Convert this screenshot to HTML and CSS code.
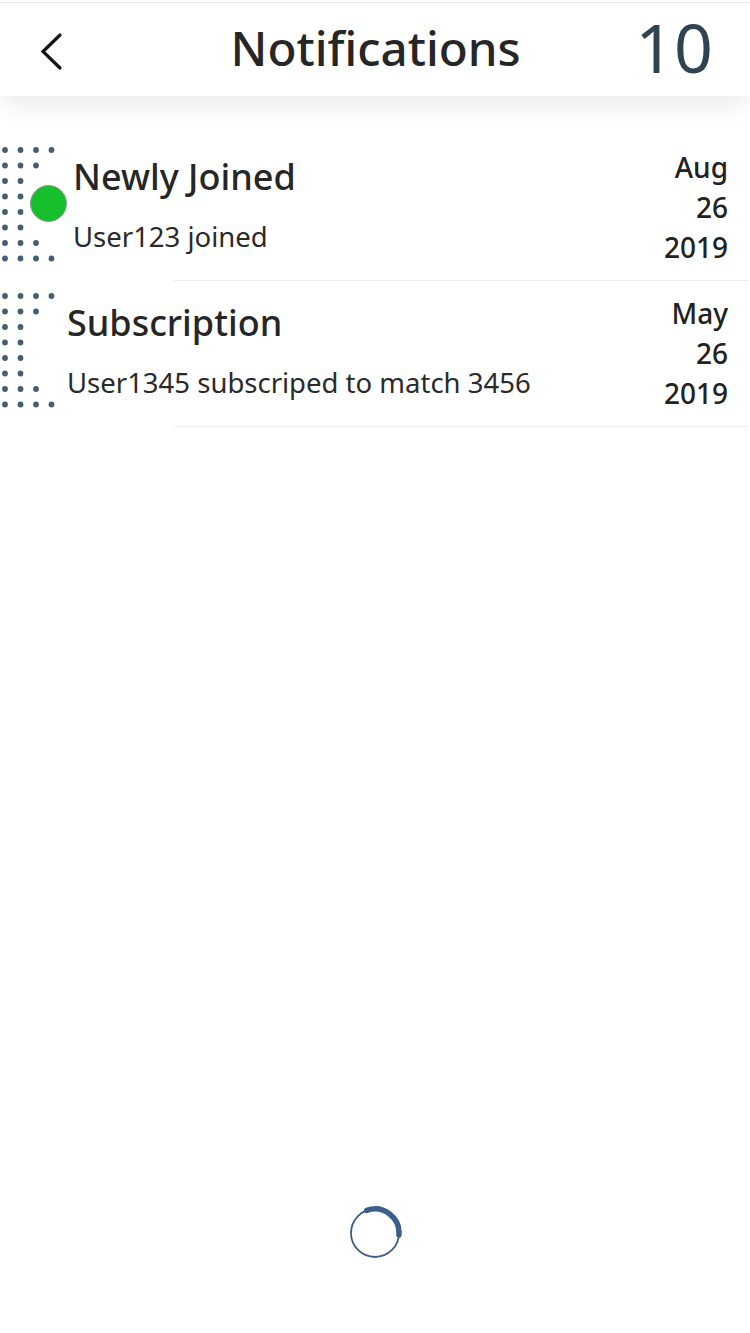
FILE: index.html
```html
<!DOCTYPE html>
<html>
<head>
<meta charset="utf-8">
<link rel="stylesheet" href="styles.css">
</head>
<body>
<div class="app">
  <header class="topbar">
    <div class="back">
      <svg width="24" height="40" viewBox="0 0 24 40"><polyline points="20,3 3,19.5 20,36" fill="none" stroke="#111" stroke-width="3.2" stroke-linecap="round" stroke-linejoin="miter"/></svg>
    </div>
    <h1 class="title">Notifications</h1>
    <div class="count">10</div>
  </header>

  <ul class="list">
    <li class="item unread">
      <div class="deco">
        <svg class="dots" width="60" height="130" viewBox="0 0 60 130">
          <g fill="#445f6f">
            <circle cx="5" cy="15" r="2.9"/><circle cx="20.5" cy="15" r="2.9"/><circle cx="36" cy="15" r="2.9"/><circle cx="51.5" cy="15" r="2.9"/>
            <circle cx="5" cy="30.5" r="2.9"/><circle cx="20.5" cy="30.5" r="2.9"/><circle cx="36" cy="30.5" r="2.9"/>
            <circle cx="5" cy="46" r="2.9"/><circle cx="20.5" cy="46" r="2.9"/>
            <circle cx="5" cy="61.5" r="2.9"/><circle cx="20.5" cy="61.5" r="2.9"/>
            <circle cx="5" cy="77" r="2.9"/><circle cx="20.5" cy="77" r="2.9"/>
            <circle cx="5" cy="92.5" r="2.9"/><circle cx="20.5" cy="92.5" r="2.9"/>
            <circle cx="5" cy="108" r="2.9"/><circle cx="20.5" cy="108" r="2.9"/><circle cx="36" cy="108" r="2.9"/>
            <circle cx="5" cy="123.5" r="2.9"/><circle cx="20.5" cy="123.5" r="2.9"/><circle cx="36" cy="123.5" r="2.9"/><circle cx="51.5" cy="123.5" r="2.9"/>
          </g>
        </svg>
        <span class="status"></span>
      </div>
      <div class="body">
        <h2 class="heading">Newly Joined</h2>
        <p class="text">User123 joined</p>
      </div>
      <div class="date"><span>Aug</span><span>26</span><span>2019</span></div>
    </li>
    <li class="item">
      <div class="deco">
        <svg class="dots" width="60" height="130" viewBox="0 0 60 130">
          <g fill="#445f6f">
            <circle cx="5" cy="15" r="2.9"/><circle cx="20.5" cy="15" r="2.9"/><circle cx="36" cy="15" r="2.9"/><circle cx="51.5" cy="15" r="2.9"/>
            <circle cx="5" cy="30.5" r="2.9"/><circle cx="20.5" cy="30.5" r="2.9"/><circle cx="36" cy="30.5" r="2.9"/>
            <circle cx="5" cy="46" r="2.9"/><circle cx="20.5" cy="46" r="2.9"/>
            <circle cx="5" cy="61.5" r="2.9"/><circle cx="20.5" cy="61.5" r="2.9"/>
            <circle cx="5" cy="77" r="2.9"/><circle cx="20.5" cy="77" r="2.9"/>
            <circle cx="5" cy="92.5" r="2.9"/><circle cx="20.5" cy="92.5" r="2.9"/>
            <circle cx="5" cy="108" r="2.9"/><circle cx="20.5" cy="108" r="2.9"/><circle cx="36" cy="108" r="2.9"/>
            <circle cx="5" cy="123.5" r="2.9"/><circle cx="20.5" cy="123.5" r="2.9"/><circle cx="36" cy="123.5" r="2.9"/><circle cx="51.5" cy="123.5" r="2.9"/>
          </g>
        </svg>
      </div>
      <div class="body">
        <h2 class="heading">Subscription</h2>
        <p class="text">User1345 subscriped to match 3456</p>
      </div>
      <div class="date"><span>May</span><span>26</span><span>2019</span></div>
    </li>
  </ul>

  <div class="spacer"></div>

  <div class="loader">
    <svg width="56" height="56" viewBox="0 0 56 56">
      <circle cx="28" cy="28" r="24" fill="none" stroke="#3b5f88" stroke-width="1.8"/>
      <path d="M19.8 5.45 A24 24 0 0 1 51.9 30.1" fill="none" stroke="#3b5f88" stroke-width="5.5" stroke-linecap="round"/>
    </svg>
  </div>
</div>
</body>
</html>
```
FILE: styles.css
```css
* { box-sizing: border-box; }
html, body { margin: 0; padding: 0; background: #fff; }
body {
  font-family: "Noto Sans", "Liberation Sans", Arial, sans-serif;
  color: #262626;
}
.app {
  width: 750px;
  height: 1333px;
  display: flex;
  flex-direction: column;
  padding-top: 2px;
  overflow: hidden;
}
.topbar {
  position: relative;
  z-index: 1;
  height: 94px;
  flex: none;
  display: flex;
  align-items: center;
  border-top: 1px solid #e6e6e6;
  background: #fff;
  box-shadow: 0 12px 24px -4px rgba(0,0,0,0.09);
  padding: 0 37px 0 40px;
}
.back { width: 24px; height: 40px; display: flex; margin-top: 4px; }
.title {
  flex: 1;
  margin: 0 0 4px;
  text-align: center;
  font-size: 47.5px;
  font-weight: 500;
  color: #262626;
  padding-left: 52px;
}
.count {
  font-size: 68px;
  font-weight: 400;
  color: #2f4450;
  line-height: 1;
  margin-bottom: 6px;
}
.list {
  list-style: none;
  margin: 0;
  padding: 39px 0 0;
}
.item {
  position: relative;
  display: flex;
  height: 146px;
  padding-right: 22px;
}
.item::after {
  content: "";
  position: absolute;
  left: 174px;
  right: 2px;
  bottom: 0;
  height: 1px;
  background: #ececec;
}
.deco {
  position: relative;
  width: 67px;
  flex: none;
}
.dots { display: block; }
.status {
  position: absolute;
  left: 30px;
  top: 50px;
  width: 37px;
  height: 37px;
  border-radius: 50%;
  background: #16c02d;
  border: 1px solid #9a9a9a;
}
.unread .body { padding-left: 6px; }
.body {
  flex: 1;
  padding-top: 19px;
}
.heading {
  margin: 0;
  font-size: 36px;
  font-weight: 500;
  line-height: 46px;
  color: #262626;
}
.text {
  margin: 19px 0 0;
  font-size: 27.5px;
  line-height: 36px;
  color: #2a2a2a;
}
.date {
  display: flex;
  flex-direction: column;
  align-items: flex-end;
  padding-top: 12px;
  font-size: 28px;
  font-weight: 500;
  line-height: 40px;
  color: #222;
}
.spacer { flex: 1; }
.loader {
  display: flex;
  justify-content: center;
  padding-bottom: 72px;
}
```
